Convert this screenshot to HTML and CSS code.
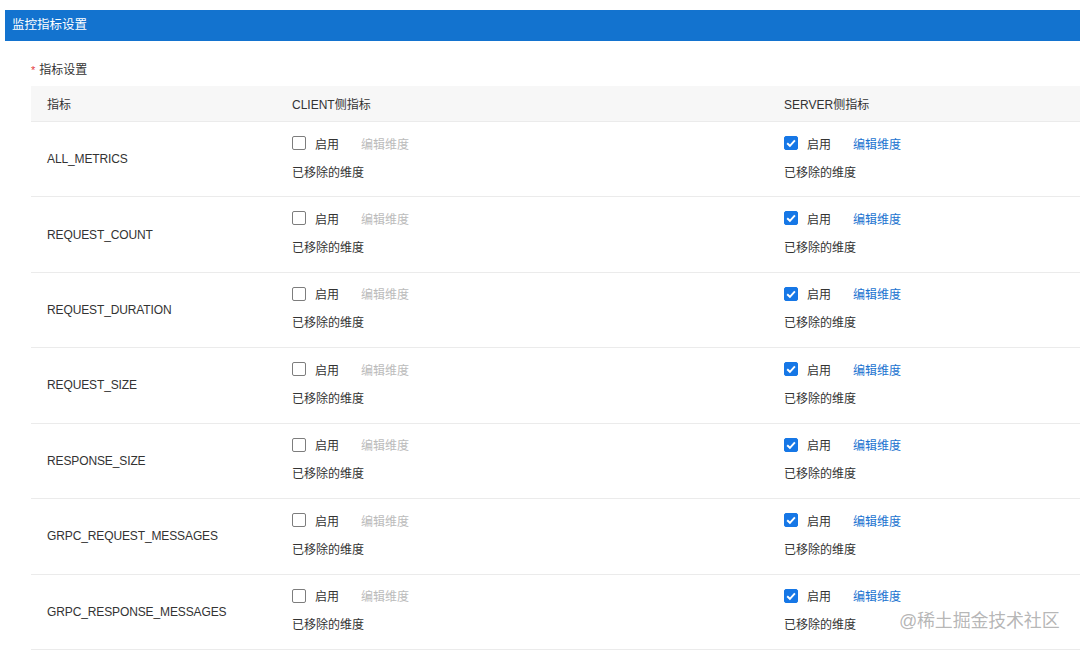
FILE: index.html
```html
<!DOCTYPE html>
<html lang="zh">
<head>
<meta charset="utf-8">
<title>监控指标设置</title>
<link rel="stylesheet" href="styles.css">
</head>
<body>
<div class="page">
  <div class="titlebar">监控指标设置</div>
  <div class="section">
    <div class="label"><span class="req">*</span>指标设置</div>
    <div class="table">
      <div class="row head">
        <div class="cell c1">指标</div>
        <div class="cell c2">CLIENT侧指标</div>
        <div class="cell c3">SERVER侧指标</div>
      </div>
      <div class="row">
        <div class="cell c1 name">ALL_METRICS</div>
        <div class="cell c2"><div class="line"><span class="cb"></span><span class="en">启用</span><span class="edit off">编辑维度</span></div><div class="line">已移除的维度</div></div>
        <div class="cell c3"><div class="line"><span class="cb on"><svg viewBox="0 0 14 14" width="14" height="14"><path d="M3.2 7.2 L5.9 9.8 L10.9 4.3" fill="none" stroke="#fff" stroke-width="1.9"/></svg></span><span class="en">启用</span><span class="edit">编辑维度</span></div><div class="line">已移除的维度</div></div>
      </div>
      <div class="row">
        <div class="cell c1 name">REQUEST_COUNT</div>
        <div class="cell c2"><div class="line"><span class="cb"></span><span class="en">启用</span><span class="edit off">编辑维度</span></div><div class="line">已移除的维度</div></div>
        <div class="cell c3"><div class="line"><span class="cb on"><svg viewBox="0 0 14 14" width="14" height="14"><path d="M3.2 7.2 L5.9 9.8 L10.9 4.3" fill="none" stroke="#fff" stroke-width="1.9"/></svg></span><span class="en">启用</span><span class="edit">编辑维度</span></div><div class="line">已移除的维度</div></div>
      </div>
      <div class="row">
        <div class="cell c1 name">REQUEST_DURATION</div>
        <div class="cell c2"><div class="line"><span class="cb"></span><span class="en">启用</span><span class="edit off">编辑维度</span></div><div class="line">已移除的维度</div></div>
        <div class="cell c3"><div class="line"><span class="cb on"><svg viewBox="0 0 14 14" width="14" height="14"><path d="M3.2 7.2 L5.9 9.8 L10.9 4.3" fill="none" stroke="#fff" stroke-width="1.9"/></svg></span><span class="en">启用</span><span class="edit">编辑维度</span></div><div class="line">已移除的维度</div></div>
      </div>
      <div class="row">
        <div class="cell c1 name">REQUEST_SIZE</div>
        <div class="cell c2"><div class="line"><span class="cb"></span><span class="en">启用</span><span class="edit off">编辑维度</span></div><div class="line">已移除的维度</div></div>
        <div class="cell c3"><div class="line"><span class="cb on"><svg viewBox="0 0 14 14" width="14" height="14"><path d="M3.2 7.2 L5.9 9.8 L10.9 4.3" fill="none" stroke="#fff" stroke-width="1.9"/></svg></span><span class="en">启用</span><span class="edit">编辑维度</span></div><div class="line">已移除的维度</div></div>
      </div>
      <div class="row">
        <div class="cell c1 name">RESPONSE_SIZE</div>
        <div class="cell c2"><div class="line"><span class="cb"></span><span class="en">启用</span><span class="edit off">编辑维度</span></div><div class="line">已移除的维度</div></div>
        <div class="cell c3"><div class="line"><span class="cb on"><svg viewBox="0 0 14 14" width="14" height="14"><path d="M3.2 7.2 L5.9 9.8 L10.9 4.3" fill="none" stroke="#fff" stroke-width="1.9"/></svg></span><span class="en">启用</span><span class="edit">编辑维度</span></div><div class="line">已移除的维度</div></div>
      </div>
      <div class="row">
        <div class="cell c1 name">GRPC_REQUEST_MESSAGES</div>
        <div class="cell c2"><div class="line"><span class="cb"></span><span class="en">启用</span><span class="edit off">编辑维度</span></div><div class="line">已移除的维度</div></div>
        <div class="cell c3"><div class="line"><span class="cb on"><svg viewBox="0 0 14 14" width="14" height="14"><path d="M3.2 7.2 L5.9 9.8 L10.9 4.3" fill="none" stroke="#fff" stroke-width="1.9"/></svg></span><span class="en">启用</span><span class="edit">编辑维度</span></div><div class="line">已移除的维度</div></div>
      </div>
      <div class="row">
        <div class="cell c1 name">GRPC_RESPONSE_MESSAGES</div>
        <div class="cell c2"><div class="line"><span class="cb"></span><span class="en">启用</span><span class="edit off">编辑维度</span></div><div class="line">已移除的维度</div></div>
        <div class="cell c3"><div class="line"><span class="cb on"><svg viewBox="0 0 14 14" width="14" height="14"><path d="M3.2 7.2 L5.9 9.8 L10.9 4.3" fill="none" stroke="#fff" stroke-width="1.9"/></svg></span><span class="en">启用</span><span class="edit">编辑维度</span></div><div class="line">已移除的维度</div></div>
      </div>
    </div>
  </div>
  <div class="watermark">@稀土掘金技术社区</div>
</div>
</body>
</html>
```

FILE: styles.css
```css
* { box-sizing: border-box; }
html, body { margin: 0; padding: 0; background: #fff; }
body {
  font-family: "Helvetica Neue", "Liberation Sans", "Noto Sans CJK SC", sans-serif;
  font-size: 12px;
  color: #333;
  overflow: hidden;
  width: 1080px;
  height: 651px;
}
.page { position: relative; padding-top: 10px; height: 651px; }
.titlebar {
  margin-left: 5px;
  height: 31px;
  background: #1373cf;
  color: #fff;
  font-size: 12.5px;
  line-height: 31px;
  padding-left: 7px;
}
.section { padding-left: 31px; padding-top: 19px; }
.label { height: 20px; line-height: 20px; color: #333; }
.req { color: #e4393c; margin-right: 4px; font-size: 11px; }
.table { margin-top: 6px; width: 1080px; }
.row {
  display: flex;
  border-bottom: 1px solid #ebebeb;
  height: 75.43px;
}
.row.head {
  background: #f7f7f7;
  height: 36px;
  align-items: center;
  color: #333;
}
.cell { padding-left: 16px; }
.c1 { width: 245px; }
.c2 { width: 492px; }
.c3 { flex: 1; }
.row:not(.head) .cell { padding-top: 11px; }
.row:not(.head) .cell.name { padding-top: 0; display: flex; align-items: center; letter-spacing: -0.12px; }
.line { display: flex; align-items: center; height: 20px; }
.line + .line { margin-top: 8px; }
.cb {
  width: 14px; height: 14px;
  border: 1px solid #7d7d7d;
  border-radius: 2px;
  background: #fff;
  display: inline-flex;
  margin-right: 9px;
}
.cb.on { background: #1677e6; border-color: #1677e6; }
.cb svg { margin: -1px; }
.en { margin-right: 22px; }
.edit { color: #1a73d0; }
.edit.off { color: #bbb; }
.watermark {
  position: absolute;
  left: 899px;
  top: 610px;
  font-size: 18px;
  color: rgba(120,120,120,0.55);
  line-height: 22px;
  letter-spacing: -0.2px;
}
```
